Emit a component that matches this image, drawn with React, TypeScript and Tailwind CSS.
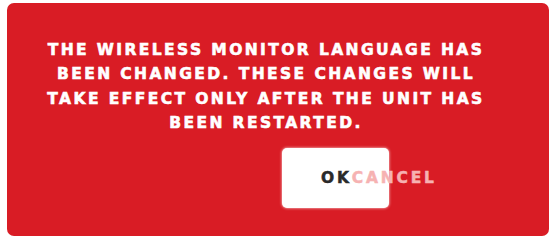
export default function App() {
  return (
    <div className="h-[240px] w-[553px] bg-white pb-[4px] pl-[7px] pr-[4px] pt-[3px]">
      <div
        className="flex h-full flex-col items-center rounded-[7px] bg-[#d91c25] pr-[24px] pt-[35px]"
        style={{ fontFamily: '"DejaVu Sans", "Liberation Sans", Arial, sans-serif' }}
      >
        <p className="whitespace-nowrap text-center text-[15.5px] font-bold uppercase leading-[24.3px] tracking-[2.4px] text-white [-webkit-text-stroke:0.6px_white]">
          The wireless monitor language has
          <br />
          been changed. These changes will
          <br />
          take effect only after the unit has
          <br />
          been restarted.
        </p>
        <div className="mt-[13px] flex w-full pl-[275px]">
          <div className="flex h-[60px] w-[107px] items-center whitespace-nowrap rounded-[5px] bg-white pl-[39px] text-[15.5px] font-bold tracking-[2.8px] shadow-[0_0_3px_rgba(255,255,255,0.9)] [-webkit-text-stroke:0.5px_currentColor]">
            <span className="text-[#2a2a2a]">OK</span>
            <span className="text-[#f6b2b2]">CANCEL</span>
          </div>
        </div>
      </div>
    </div>
  );
}
